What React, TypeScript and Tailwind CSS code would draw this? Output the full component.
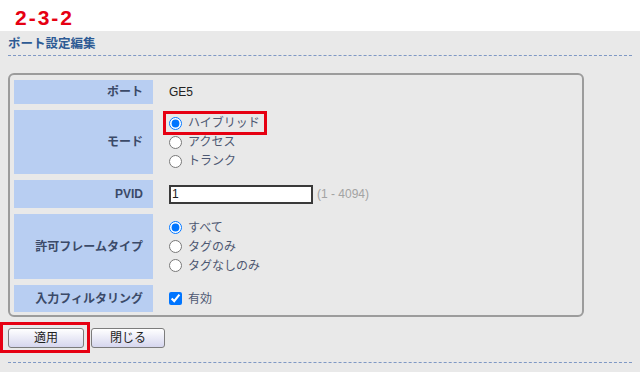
import React from "react";

const font = "font-['Liberation_Sans','Noto_Sans_CJK_JP',sans-serif]";

function Label({ h, children }: { h: string; children: React.ReactNode }) {
  return (
    <div
      className={`${h} bg-[#b8cef2] flex items-center justify-end pr-[10px] text-[12px] font-bold text-[#3b4a68]`}
    >
      {children}
    </div>
  );
}

function Radio({
  label,
  checked,
  name,
  highlight,
}: {
  label: string;
  checked?: boolean;
  name: string;
  highlight?: boolean;
}) {
  return (
    <label className="relative flex items-center gap-[6px] h-[19px] w-fit">
      <input
        type="radio"
        name={name}
        defaultChecked={checked}
        className="w-[13px] h-[13px] m-0 accent-[#0075ff]"
      />
      <span className="text-[12px] text-[#4e5872]">{label}</span>
      {highlight && (
        <span className="absolute -left-[6px] -top-[3px] w-[104px] h-[24px] border-[3px] border-[#e60012] pointer-events-none" />
      )}
    </label>
  );
}

export default function App() {
  return (
    <div className={`w-[640px] h-[372px] bg-white overflow-hidden ${font}`}>
      {/* Page number */}
      <div className="h-[31px] pl-[15px] pt-[6px] text-[21px] leading-[24px] font-bold tracking-[2px] text-[#e60012]">
        2-3-2
      </div>

      <div className="bg-[#e9e9e9] h-[341px] px-2 pt-[5px]">
        <h2 className="text-[12.5px] leading-[16px] font-bold text-[#2d5a94]">
          ポート設定編集
        </h2>
        <div className="mt-[3px] border-t border-dashed border-[#7f98c4]" />

        {/* Panel */}
        <div className="mt-[17px] w-[576px] border-2 border-[#9c9c9c] rounded-[6px] px-[4px] pt-[5px] pb-[3px]">
          <div className="grid grid-cols-[139px_1fr] gap-x-[6px] gap-y-[6px]">
            <Label h="h-[24px]">ポート</Label>
            <div className="h-[24px] flex items-center pl-[10px] text-[12px] text-[#222]">
              GE5
            </div>

            <Label h="h-[64px]">モード</Label>
            <div className="h-[64px] flex flex-col justify-center pl-[10px]">
              <Radio name="mode" label="ハイブリッド" checked highlight />
              <Radio name="mode" label="アクセス" />
              <Radio name="mode" label="トランク" />
            </div>

            <Label h="h-[28px]">PVID</Label>
            <div className="h-[28px] flex items-center pl-[10px]">
              <input
                type="text"
                defaultValue="1"
                className="w-[144px] h-[19px] bg-white border-2 border-[#3a3a3a] px-[1px] text-[12px] text-[#222] outline-none"
              />
              <span className="ml-[4px] text-[12px] text-[#a3a3a3]">(1 - 4094)</span>
            </div>

            <Label h="h-[65px]">許可フレームタイプ</Label>
            <div className="h-[65px] flex flex-col justify-center pl-[10px]">
              <Radio name="frame" label="すべて" checked />
              <Radio name="frame" label="タグのみ" />
              <Radio name="frame" label="タグなしのみ" />
            </div>

            <Label h="h-[27px]">入力フィルタリング</Label>
            <div className="h-[27px] flex items-center gap-[6px] pl-[10px]">
              <input
                type="checkbox"
                defaultChecked
                className="w-[13px] h-[13px] m-0 accent-[#0075ff]"
              />
              <span className="text-[12px] text-[#4e5872]">有効</span>
            </div>
          </div>
        </div>

        {/* Buttons */}
        <div className="mt-[11px] flex gap-[7px]">
          <div className="relative flex">
            <button className="w-[76px] h-[20px] rounded-[3px] border border-[#7c7c7c] bg-linear-to-b from-white to-[#d6d6ee] text-[12px] leading-[18px] text-[#222]">
              適用
            </button>
            <span className="absolute -left-[8px] -top-[6px] w-[90px] h-[31px] border-[3px] border-[#e60012] pointer-events-none" />
          </div>
          <button className="w-[74px] h-[20px] rounded-[3px] border border-[#7c7c7c] bg-linear-to-b from-white to-[#d6d6ee] text-[12px] leading-[18px] text-[#222]">
            閉じる
          </button>
        </div>

        <div className="mt-[14px] border-t border-dashed border-[#7f98c4]" />
      </div>
    </div>
  );
}
